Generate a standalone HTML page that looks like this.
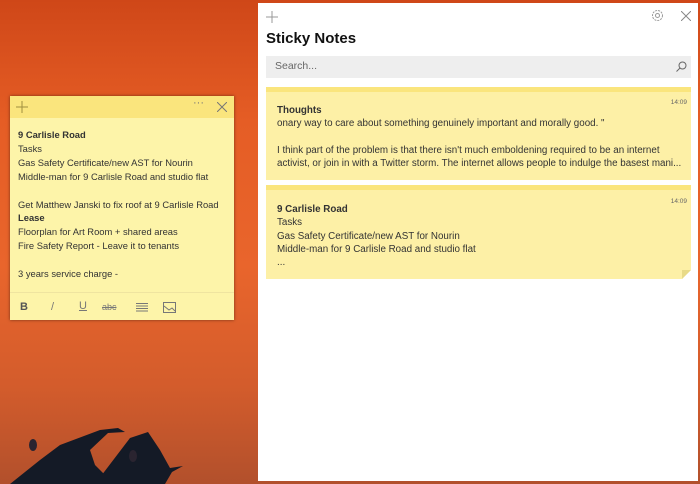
<!DOCTYPE html><html><head><style>
body{margin:0;width:700px;height:484px;overflow:hidden;position:relative;font-family:"Segoe UI","Liberation Sans",sans-serif;
background:linear-gradient(180deg,#cf4718 0%,#e55d25 25%,#e9652c 55%,#d35c2c 80%,#b2502c 100%);}
.t{position:absolute;white-space:nowrap}
.note{position:absolute;left:10px;top:96px;width:224px;height:224px;background:#fdf4a9;box-shadow:0 0 3px rgba(0,0,0,.5)}
.nh{height:22px;background:#fae57d}
.nb{padding:10px 8px;font-size:9.4px;line-height:13.9px;color:#333;white-space:nowrap}
.panel{position:absolute;left:258px;top:3px;width:440px;height:478px;background:#fff}
.card{position:absolute;left:8px;width:425px;background:#fdf0a6;border-top:5px solid #fae57d;font-size:9.8px;line-height:13.3px;color:#333;white-space:nowrap}
</style></head><body>
<svg style="position:absolute;left:0;top:420px" width="260" height="64"><path fill="#141a26" d="M10 64 L40 40 L60 25 L100 10 L118 8 L125 12 L108 13 L90 30 L95 45 L110 60 L120 64Z M95 64 L130 18 L148 12 L160 30 L170 48 L183 46 L172 52 L165 64Z"/><ellipse cx="133" cy="36" rx="4" ry="6" fill="#2a2430"/><ellipse cx="33" cy="25" rx="4" ry="6" fill="#2a2430"/></svg>
<div class="note"><div class="nh">
<svg class="t" style="left:6px;top:5px" width="12" height="12"><path d="M6 0V12M0 6H12" stroke="#a09040" stroke-width="1"/></svg>
<span class="t" style="left:183px;top:1px;font-size:11px;color:#777">···</span>
<svg class="t" style="left:207px;top:6px" width="10" height="10"><path d="M0 0L10 10M10 0L0 10" stroke="#777" stroke-width="1"/></svg></div>
<div class="nb"><b>9 Carlisle Road</b><br>Tasks<br>Gas Safety Certificate/new AST for Nourin<br>Middle-man for 9 Carlisle Road and studio flat<br><br>Get Matthew Janski to fix roof at 9 Carlisle Road<br><b>Lease</b><br>Floorplan for Art Room + shared areas<br>Fire Safety Report - Leave it to tenants<br><br>3 years service charge -</div>
<div style="position:absolute;left:0;right:0;top:196px;border-top:1px solid #efe4a0"></div>
<span class="t" style="left:10px;top:205px;font-size:11px;font-weight:bold;color:#555">B</span>
<span class="t" style="left:41px;top:205px;font-size:11px;color:#777">/</span>
<span class="t" style="left:69px;top:204px;font-size:11px;color:#777;text-decoration:underline">U</span>
<span class="t" style="left:92px;top:206px;font-size:9px;color:#777;text-decoration:line-through">abc</span>
<svg class="t" style="left:126px;top:207px" width="12" height="9"><path d="M0 .5H12M0 3H12M0 5.5H12M0 8H12" stroke="#777"/></svg>
<svg class="t" style="left:153px;top:206px" width="13" height="11"><rect x=".5" y=".5" width="12" height="10" fill="none" stroke="#777"/><path d="M1 4L6 8L9 6L12 9" stroke="#777" fill="none"/></svg>
</div>
<div class="panel">
<svg class="t" style="left:8px;top:8px" width="12" height="12"><path d="M6 0V12M0 6H12" stroke="#999"/></svg>
<svg class="t" style="left:393px;top:6px" width="13" height="13"><circle cx="6.5" cy="6.5" r="5" fill="none" stroke="#999" stroke-dasharray="2 1"/><circle cx="6.5" cy="6.5" r="2" fill="none" stroke="#999"/></svg>
<svg class="t" style="left:423px;top:8px" width="10" height="10"><path d="M0 0L10 10M10 0L0 10" stroke="#888"/></svg>
<span class="t" style="left:8px;top:27px;font-size:15px;font-weight:bold;color:#111">Sticky Notes</span>
<div class="t" style="left:8px;top:53px;width:425px;height:22px;background:#eeeeee"></div>
<span class="t" style="left:17px;top:57px;font-size:10.5px;color:#666">Search...</span>
<svg class="t" style="left:418px;top:58px" width="11" height="11"><circle cx="6.5" cy="4.5" r="3.5" fill="none" stroke="#666"/><path d="M4 7L0.5 10.5" stroke="#666"/></svg>
<div class="card" style="top:84px;height:88px">
<span class="t" style="right:4px;top:4px;font-size:6.5px;color:#666">14:09</span>
<div style="padding:12px 0 0 11px"><b>Thoughts</b><br>onary way to care about something genuinely important and morally good. "<br><br>I think part of the problem is that there isn't much emboldening required to be an internet<br>activist, or join in with a Twitter storm. The internet allows people to indulge the basest mani...</div></div>
<div class="card" style="top:182px;height:89px">
<span class="t" style="right:4px;top:5px;font-size:6.5px;color:#666">14:09</span>
<div style="padding:13px 0 0 11px"><b>9 Carlisle Road</b><br>Tasks<br>Gas Safety Certificate/new AST for Nourin<br>Middle-man for 9 Carlisle Road and studio flat<br>...</div>
<svg class="t" style="right:0;bottom:0" width="9" height="9"><path d="M9 0L0 9H9Z" fill="#fff"/><path d="M9 0L0 9L0 0Z" fill="#e8da88"/></svg></div>
</div>
</body></html>
